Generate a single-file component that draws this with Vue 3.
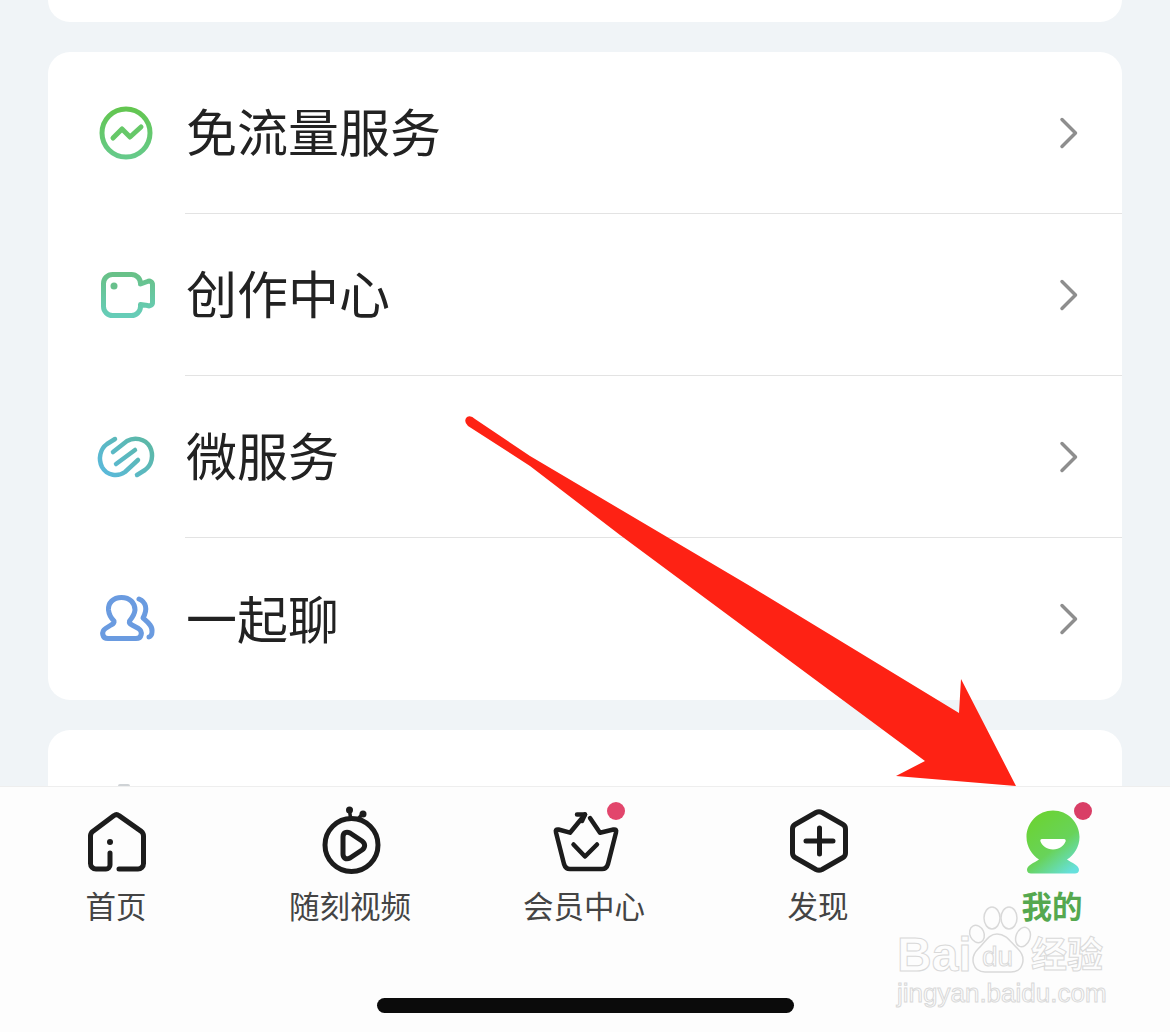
<template>
  <div class="page">
    <div class="content">
      <div class="card card-top"></div>

      <div class="card card-menu">
        <div v-for="(item, i) in menu" :key="item.label" class="row">
          <div class="row-icon">
            <!-- traffic -->
            <svg v-if="i === 0" viewBox="0 0 60 60" fill="none" stroke-width="5" stroke-linecap="round" stroke-linejoin="round">
              <defs>
                <linearGradient id="g-traffic" x1="0" y1="0" x2="0" y2="1">
                  <stop offset="0" stop-color="#63c650" />
                  <stop offset="1" stop-color="#66ca8a" />
                </linearGradient>
              </defs>
              <circle cx="30" cy="30" r="24" stroke="url(#g-traffic)" />
              <path d="M17 35L26 26L34 34L45 24" stroke="#66c868" />
            </svg>
            <!-- camera -->
            <svg v-else-if="i === 1" viewBox="0 0 60 60" fill="none" stroke-width="5" stroke-linecap="round" stroke-linejoin="round">
              <defs>
                <linearGradient id="g-cam" x1="0" y1="0" x2="0" y2="1">
                  <stop offset="0" stop-color="#68c188" />
                  <stop offset="1" stop-color="#66cdb8" />
                </linearGradient>
              </defs>
              <path d="M16.5 9.5H35.5a9 9 0 0 1 9 9v0.5l7-2.5a3.5 3.5 0 0 1 5 3.5V37a3.5 3.5 0 0 1-5 3.5l-7-1v2a9 9 0 0 1-9 9H16.5a9 9 0 0 1-9-9V18.5a9 9 0 0 1 9-9z" stroke="url(#g-cam)" />
              <circle cx="18" cy="21" r="3.5" fill="#68c08c" stroke="none" />
            </svg>
            <!-- link -->
            <svg v-else-if="i === 2" viewBox="0 0 60 60" fill="none" stroke-width="4.5" stroke-linecap="round" stroke-linejoin="round">
              <defs>
                <linearGradient id="g-link" gradientUnits="userSpaceOnUse" x1="50" y1="8" x2="8" y2="50">
                  <stop offset="0" stop-color="#5cb8a4" />
                  <stop offset="1" stop-color="#5ab9dc" />
                </linearGradient>
              </defs>
              <path d="M19 12L11 17C4 22 2 32 6 40C11 49 22 50 29 45L42 33" stroke="url(#g-link)" />
              <path d="M41 48L49 43C56 38 58 28 54 20C49 11 38 10 31 14L17 25" stroke="url(#g-link)" />
              <path d="M20 37L39 23" stroke="url(#g-link)" />
            </svg>
            <!-- people -->
            <svg v-else viewBox="0 0 60 60" fill="none" stroke="#6a9be0" stroke-width="5" stroke-linecap="round" stroke-linejoin="round">
              <path d="M25.5 8.5C17 8.5 12 14 12.5 21C13 26 15 29 18 32C18.5 34 17 35 15 36L9.5 39.5C5 42.5 6 49.5 12 49.5H40C46 49.5 47 42.5 42.5 39.5L36 36C34 35 33 34 33.5 32C36 29 38.5 26 39 21C39 14 34 8.5 25.5 8.5Z" />
              <path d="M43 10C50 13 52 20 47 29C50 32 57 36 56 43C56 46 54 48 53 48" />
            </svg>
          </div>
          <div class="row-body">
            <span class="row-label">{{ item.label }}</span>
            <svg class="chevron" viewBox="0 0 20 32" fill="none" stroke="#8e8e8e" stroke-width="3.5" stroke-linecap="round" stroke-linejoin="round">
              <path d="M3 2.5L16.5 16L3 29.5" />
            </svg>
          </div>
        </div>
      </div>

      <div class="card card-rest">
        <span class="next-icon-peek"></span>
      </div>
    </div>

    <div class="tabbar">
      <div class="tabs">
        <div class="tab">
          <svg class="tab-icon" viewBox="0 0 60 60" fill="none" stroke="#1c1c1c" stroke-width="5" stroke-linecap="round" stroke-linejoin="round">
            <path d="M23 41V53a4 4 0 0 1-4 4H9a5.5 5.5 0 0 1-5.5-5.5V24a6 6 0 0 1 2.2-4.6L27 3.6a4 4 0 0 1 5 0L54.3 19.4a6 6 0 0 1 2.2 4.6V51.5a5.5 5.5 0 0 1-5.5 5.5H32" />
            <circle cx="23" cy="30" r="3" fill="#1c1c1c" stroke="none" />
          </svg>
          <span class="tab-label">首页</span>
        </div>
        <div class="tab">
          <svg class="tab-icon" viewBox="0 0 60 60" fill="none" stroke="#1c1c1c" stroke-width="5" stroke-linecap="round" stroke-linejoin="round">
            <circle cx="30.5" cy="33" r="26.5" />
            <path d="M22 25C22 21 25 19 29 21L41 29C44.5 31.5 44.5 35.5 41 38L29 46C25 48 22 46 22 42Z" />
            <path d="M28.5 -2L29.5 6M41.5 2L37 7" stroke-width="3.5" />
            <circle cx="28.5" cy="-2" r="3.5" fill="#1c1c1c" stroke="none" />
            <circle cx="42" cy="2" r="3.5" fill="#1c1c1c" stroke="none" />
          </svg>
          <span class="tab-label">随刻视频</span>
        </div>
        <div class="tab">
          <div class="tab-icon-wrap">
            <svg class="tab-icon" viewBox="0 0 60 60" fill="none" stroke="#1c1c1c" stroke-width="4.5" stroke-linecap="round" stroke-linejoin="round">
              <path d="M30 2.5L15 20.7L3.5 17.5Q0 17 1 20.5L9 52Q10.5 57 15 57H47Q51.5 57 53 52L61 20.5Q62 17 58.5 17.5L45 20.7L35 6" />
              <path d="M22 2.5L30 2.5L27 9" />
              <path d="M18.5 32.5L30 44.5L42 32.5" />
            </svg>
            <span class="dot dot-crown"></span>
          </div>
          <span class="tab-label">会员中心</span>
        </div>
        <div class="tab">
          <svg class="tab-icon" viewBox="0 0 60 60" fill="none" stroke="#1c1c1c" stroke-width="5" stroke-linecap="round" stroke-linejoin="round">
            <path d="M27 0.5Q30-1 33 0.5L54 12.5Q56.5 14 56.5 17V41Q56.5 44 54 45.5L33 57.5Q30 59 27 57.5L6 45.5Q3.5 44 3.5 41V17Q3.5 14 6 12.5Z" />
            <path d="M17 29H44M30.5 16V42" />
          </svg>
          <span class="tab-label">发现</span>
        </div>
        <div class="tab">
          <div class="tab-icon-wrap">
            <svg class="tab-icon" viewBox="0 0 60 60">
              <defs>
                <linearGradient id="g-mine" x1="0.2" y1="0.1" x2="0.8" y2="1">
                  <stop offset="0" stop-color="#6bd336" />
                  <stop offset="0.55" stop-color="#68d35a" />
                  <stop offset="1" stop-color="#66e0dc" />
                </linearGradient>
              </defs>
              <path fill="url(#g-mine)" d="M30 -1.5C44.6 -1.5 56.5 10.5 56.5 25C56.5 35 51 43 44 47.5C49 51 56 53 56 58C56 60.5 54 61.5 52 61.5H8C6 61.5 4 60.5 4 58C4 53 11 51 16 47.5C9 43 3.5 35 3.5 25C3.5 10.5 15.4 -1.5 30 -1.5Z" />
              <path fill="#fff" d="M19 27H41C42.5 27 43 28 42.5 29.5C41 33.5 36.5 37.5 30 37.5C23.5 37.5 19 33.5 17.5 29.5C17 28 17.5 27 19 27Z" />
            </svg>
            <span class="dot dot-mine"></span>
          </div>
          <span class="tab-label tab-label-active">我的</span>
        </div>
      </div>
      <div class="home-bar"></div>
    </div>

    <!-- annotation arrow drawn over the screenshot -->
    <svg class="arrow" viewBox="0 0 1170 1032">
      <path fill="#fe2214" d="M475 419L530 456L750 586L959 713L961 679L1016 786L896 776L925 761L620 535L530 466L468 426Q463 421 467 417Q471 415 475 419Z" />
    </svg>

    <div class="watermark">
      <svg class="paw" viewBox="0 0 70 70" fill="none" stroke="#d9d9d9" stroke-width="1.5">
        <ellipse cx="27" cy="13" rx="8" ry="11" />
        <ellipse cx="44" cy="13" rx="8" ry="11" />
        <ellipse cx="12" cy="29" rx="7" ry="9" transform="rotate(-25 12 29)" />
        <ellipse cx="58" cy="32" rx="7" ry="10" transform="rotate(20 58 32)" />
        <path d="M32 29C42 29 46 38 53 44C62 53 58 67 46 67C38 67 28 67 20 67C8 67 4 53 13 44C20 38 23 29 32 29Z" />
      </svg>
      <span class="wm-bai">Bai</span>
      <span class="wm-du">du</span>
      <span class="wm-jy">经验</span>
      <span class="wm-url">jingyan.baidu.com</span>
    </div>
  </div>
</template>

<script setup>
const menu = [
  { label: '免流量服务' },
  { label: '创作中心' },
  { label: '微服务' },
  { label: '一起聊' }
]
</script>

<style>
html, body {
  margin: 0;
  background: #f0f4f7;
}
</style>

<style scoped>
.page {
  position: relative;
  display: flex;
  flex-direction: column;
  width: 1170px;
  height: 1032px;
  overflow: hidden;
  background: #f0f4f7;
  font-family: "Noto Sans CJK SC", "Liberation Sans", sans-serif;
}

.content {
  flex: 1;
  display: flex;
  flex-direction: column;
  gap: 30px;
  padding: 0 48px;
  min-height: 0;
}

.card {
  background: #fff;
  border-radius: 22px;
}

.card-top {
  height: 22px;
  border-radius: 0 0 22px 22px;
}

.card-rest {
  flex: 1;
  display: flex;
  align-items: flex-end;
  padding-left: 70px;
  border-radius: 22px 22px 0 0;
}

.next-icon-peek {
  width: 12px;
  height: 2px;
  border-radius: 2px 2px 0 0;
  background: #cfd3d6;
}

.row {
  display: flex;
  align-items: center;
  height: 162px;
  padding-left: 48px;
}

.row-icon {
  flex-shrink: 0;
  width: 60px;
  height: 60px;
  margin-right: 29px;
}

.row-icon svg {
  display: block;
  width: 60px;
  height: 60px;
  overflow: visible;
}

.row-body {
  flex: 1;
  display: flex;
  align-items: center;
  justify-content: space-between;
  box-sizing: border-box;
  height: 100%;
  padding: 0 43px 0 1px;
  border-bottom: 1px solid #e3e3e3;
}

.row:last-child .row-body {
  border-bottom: none;
}

.row-label {
  padding-bottom: 4px;
  font-size: 51px;
  line-height: 1;
  color: #222;
}

.chevron {
  width: 20px;
  height: 32px;
}

.tabbar {
  flex-shrink: 0;
  display: flex;
  flex-direction: column;
  align-items: center;
  box-sizing: border-box;
  height: 246px;
  padding-top: 25px;
  background: #fdfdfd;
  border-top: 1px solid #eeeeee;
}

.tabs {
  display: grid;
  grid-template-columns: repeat(5, 234px);
  width: 100%;
}

.tab {
  display: flex;
  flex-direction: column;
  align-items: center;
  gap: 13px;
}

.tab-icon-wrap {
  position: relative;
  width: 60px;
  height: 60px;
}

.tab-icon {
  display: block;
  width: 60px;
  height: 60px;
  overflow: visible;
}

.dot {
  position: absolute;
  top: -10px;
  right: -10px;
  width: 18px;
  height: 18px;
  border-radius: 50%;
  background: #e2466c;
}

.dot-mine {
  background: #d93e66;
  right: -9px;
}

.tab-label {
  padding-right: 2px;
  font-size: 30.5px;
  line-height: 40px;
  color: #444;
}

.tab-label-active {
  color: #55a84f;
  font-weight: 700;
}

.home-bar {
  width: 417px;
  height: 15px;
  margin-top: 73px;
  border-radius: 8px;
  background: #0b0b0b;
}

.arrow {
  position: absolute;
  top: 0;
  left: 0;
  width: 1170px;
  height: 1032px;
  pointer-events: none;
}

.watermark {
  position: absolute;
  top: 905px;
  left: 895px;
  width: 230px;
  height: 110px;
  font-family: "Liberation Sans", "Noto Sans CJK SC", sans-serif;
  color: transparent;
  -webkit-text-stroke: 1px #d9d9d9;
  pointer-events: none;
}

.watermark span {
  position: absolute;
  white-space: nowrap;
  line-height: 1;
}

.paw {
  position: absolute;
  top: 0;
  left: 70px;
  width: 70px;
  height: 70px;
}

.wm-bai {
  top: 26px;
  left: 2px;
  font-size: 48px;
  font-weight: 700;
}

.wm-du {
  top: 38px;
  left: 87px;
  font-size: 28px;
}

.wm-jy {
  top: 29px;
  left: 136px;
  font-size: 36px;
  font-weight: 700;
  font-family: "Noto Sans CJK SC", sans-serif;
}

.wm-url {
  top: 75px;
  left: 2px;
  font-size: 26px;
}
</style>
